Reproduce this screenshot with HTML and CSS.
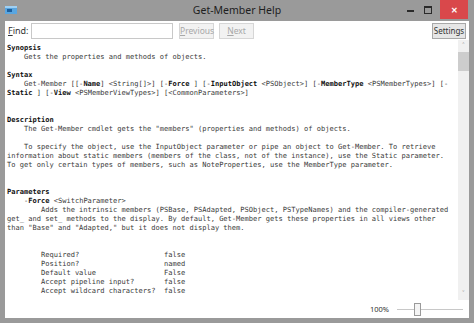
FILE: index.html
```html
<!DOCTYPE html>
<html lang="en">
<head>
    <meta charset="UTF-8">
    <meta name="viewport" content="width=device-width, initial-scale=1.0">
    <title>Get-Member Help</title>
    <link rel="stylesheet" href="styles.css">
</head>
<body>
    <div class="window">
        <div class="titlebar">
            <div class="app-icon">
                <svg width="12" height="8" viewBox="0 0 12 8">
                    <rect x="0" y="0" width="12" height="8" fill="#5aa6e0"/>
                    <rect x="0" y="0" width="12" height="2" fill="#9fd0f4"/>
                    <rect x="2" y="3" width="5" height="3" fill="#1f5f9c"/>
                </svg>
            </div>
            <div class="title">Get-Member Help</div>
            <div class="controls">
                <span class="ctl min"><i></i></span>
                <span class="ctl max"><i></i></span>
                <span class="ctl close">&#x2715;</span>
            </div>
        </div>
        <div class="client">
            <div class="toolbar">
                <label for="find"><u>F</u>ind:</label>
                <input type="text" id="find" class="find">
                <button type="button" disabled><u>P</u>revious</button>
                <button type="button" disabled><u>N</u>ext</button>
                <span class="spacer"></span>
                <button type="button" class="settings">Settings</button>
            </div>
            <div class="main">
<pre class="help"><b>Synopsis</b>
    Gets the properties and methods of objects.

<b>Syntax</b>
    Get-Member [[-<b>Name</b>] &lt;String[]&gt;] [-<b>Force</b> ] [-<b>InputObject</b> &lt;PSObject&gt;] [-<b>MemberType</b> &lt;PSMemberTypes&gt;] [-
<b>Static</b> ] [-<b>View</b> &lt;PSMemberViewTypes&gt;] [&lt;CommonParameters&gt;]


<b>Description</b>
    The Get-Member cmdlet gets the "members" (properties and methods) of objects.

    To specify the object, use the InputObject parameter or pipe an object to Get-Member. To retrieve
information about static members (members of the class, not of the instance), use the Static parameter.
To get only certain types of members, such as NoteProperties, use the MemberType parameter.


<b>Parameters</b>
    -<b>Force</b> &lt;SwitchParameter&gt;
        Adds the intrinsic members (PSBase, PSAdapted, PSObject, PSTypeNames) and the compiler-generated
get_ and set_ methods to the display. By default, Get-Member gets these properties in all views other
than "Base" and "Adapted," but it does not display them.


        Required?                    false
        Position?                    named
        Default value                False
        Accept pipeline input?       false
        Accept wildcard characters?  false</pre>
                <div class="scrollbar">
                    <span class="arrow">&#x2c4;</span>
                    <span class="thumb"></span>
                    <span class="track"></span>
                    <span class="arrow">&#x2c5;</span>
                </div>
            </div>
            <div class="statusbar">
                <span class="zoom">100%</span>
                <div class="slider">
                    <span class="knob"></span>
                </div>
            </div>
        </div>
    </div>
</body>
</html>
```

FILE: styles.css
```css
body {
    margin: 0;
    padding: 0;
    background-color: #9a9a9a;
    font-family: 'Noto Sans', 'Open Sans', sans-serif;
}

.window {
    width: 474px;
    height: 323px;
    display: flex;
    flex-direction: column;
    background-color: #9a9a9a;
}

/* title bar */

.titlebar {
    height: 21px;
    display: grid;
    grid-template-columns: 1fr auto 1fr;
    align-items: center;
}

.app-icon {
    padding-left: 5px;
    height: 8px;
    display: flex;
    margin-top: -2px;
}

.title {
    font-size: 10.5px;
    color: #1e1e1e;
    margin-top: -1px;
}

.controls {
    display: flex;
    justify-content: flex-end;
    align-self: start;
    padding-right: 6px;
}

.ctl {
    height: 19px;
    display: flex;
    align-items: center;
    justify-content: center;
}

.ctl.min {
    width: 17px;
}

.ctl.min i {
    width: 7px;
    height: 2px;
    background-color: #2a2a2a;
    margin-top: 3px;
}

.ctl.max {
    width: 17px;
}

.ctl.max i {
    width: 6px;
    height: 5px;
    border: 1px solid #2a2a2a;
    border-top-width: 2px;
    margin-top: 1px;
}

.ctl.close {
    width: 28px;
    margin-left: 4px;
    background-color: #d9484b;
    color: #fff;
    font-size: 8px;
    font-weight: bold;
}

/* client area */

.client {
    flex: 1;
    margin: 0 5px 5px;
    background-color: #fff;
    display: flex;
    flex-direction: column;
    min-height: 0;
}

.toolbar {
    height: 19px;
    display: flex;
    align-items: center;
    padding: 0 3px;
    font-size: 9px;
    color: #333;
}

.toolbar label {
    width: 23px;
}

.find {
    width: 142px;
    height: 16px;
    box-sizing: border-box;
    border: 1px solid #c8c8c8;
    padding: 0;
    margin: 0 6px 0 0;
}

button {
    height: 16px;
    padding: 0;
    border: 1px solid #d6d6d6;
    background-color: #f2f2f2;
    font-family: 'Noto Sans', 'Open Sans', sans-serif;
    font-size: 8.5px;
    color: #a8a8a8;
    width: 35px;
    margin-right: 5px;
    line-height: 13px;
}

.spacer {
    flex: 1;
}

button.settings {
    width: 34px;
    margin-right: 0;
    border-color: #a8a8a8;
    background-color: #e6e6e6;
    color: #333;
    font-size: 8px;
}

.main {
    flex: 1;
    display: flex;
    min-height: 0;
}

.help {
    flex: 1;
    margin: 0;
    padding: 3px 0 0 2px;
    font-family: 'DejaVu Sans Mono', 'Liberation Mono', monospace;
    font-size: 7.05px;
    line-height: 9px;
    color: #3a3a3a;
    overflow: hidden;
}

.help b {
    color: #111;
}

.scrollbar {
    width: 11px;
    background-color: #f0f0f0;
    display: flex;
    flex-direction: column;
}

.arrow {
    height: 12px;
    font-size: 8px;
    line-height: 12px;
    text-align: center;
    color: #9a9a9a;
}

.thumb {
    height: 19px;
    background-color: #cdcdcd;
}

.track {
    flex: 1;
}

.statusbar {
    height: 18px;
    display: flex;
    align-items: center;
    justify-content: flex-end;
    padding-right: 6px;
    font-size: 7.5px;
    color: #333;
}

.zoom {
    margin-right: 8px;
}

.slider {
    position: relative;
    width: 66px;
    height: 1px;
    background-color: #c8c8c8;
}

.knob {
    position: absolute;
    left: 17px;
    top: -6px;
    width: 5px;
    height: 11px;
    border: 1px solid #9a9a9a;
    background-color: #f4f4f4;
}
```
